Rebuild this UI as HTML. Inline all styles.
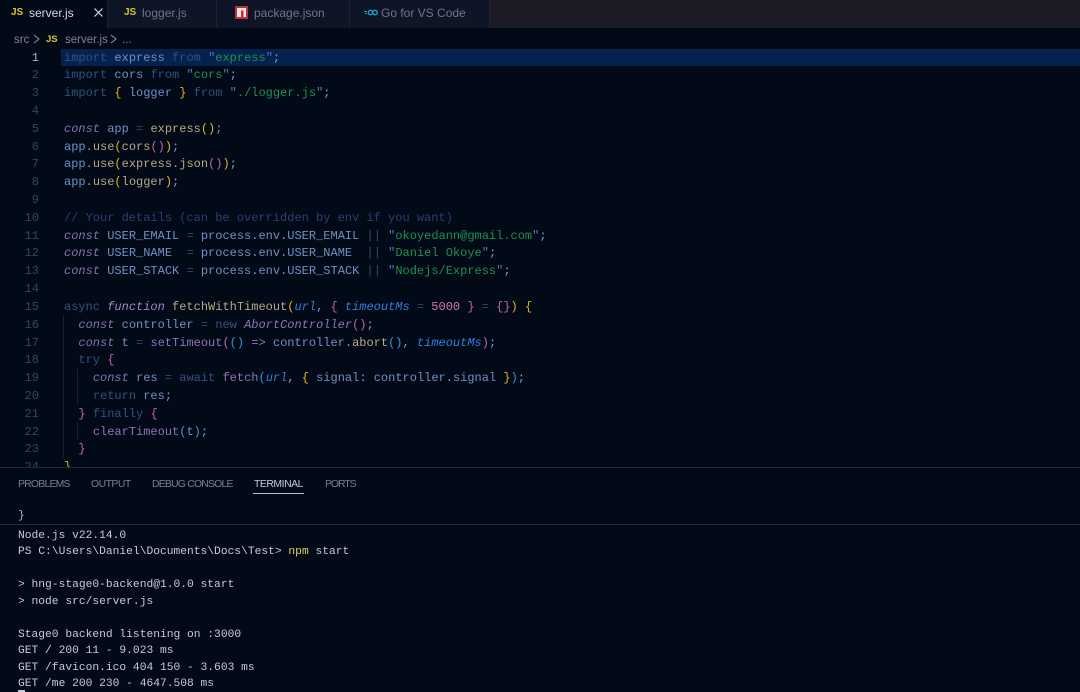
<!DOCTYPE html>
<html><head><meta charset="utf-8"><style>
html,body{margin:0;padding:0;background:#020a17;}
#r{position:relative;width:1080px;height:692px;overflow:hidden;background:#020a17;font-family:"Liberation Sans",sans-serif;filter:blur(.3px);}
.a{position:absolute;white-space:pre;}
.tab{position:absolute;top:0;height:28px;background:#0d1526;border-right:1px solid #1a2232;box-sizing:border-box;}
.t{position:absolute;top:5px;font-size:12px;line-height:16px;color:#6e7787;white-space:pre;}
.js{position:absolute;font:bold 10px "Liberation Sans",sans-serif;color:#d8c62e;}
#code{position:absolute;left:64px;top:49.5px;font:12px/17.82px "Liberation Mono",monospace;color:#7d9ccc;white-space:pre;height:417.5px;width:1016px;overflow:hidden;}
#nums{position:absolute;left:0;width:39px;top:49.5px;text-align:right;font:12px/17.82px "Liberation Mono",monospace;color:#33465f;height:417.5px;overflow:hidden;white-space:pre;}
.k{color:#2e5282}.v{color:#6f90c4}.s{color:#1d9150}.q{color:#4f7fbb}.c{color:#2b3f73}.i{font-style:italic;color:#8570ad}.f{color:#b5a886}
.y{color:#e3b623}.p{color:#c465b0}.b{color:#2f9ae0}.u{font-style:italic;color:#2f7fe0}.n{color:#d878a8}.w{color:#7f98bd}.ac{font-style:italic;color:#8e74b8}.d{color:#96a8c4}.o{color:#2e4a72}
.pt{position:absolute;top:477.5px;font-size:10.4px;line-height:13px;color:#77808e;white-space:pre;}
#term{position:absolute;left:18px;top:527.5px;font:11.27px/16.5px "Liberation Mono",monospace;color:#c4ccd8;white-space:pre;}
</style></head><body><div id="r">
<div class="a" style="left:490px;top:0;width:590px;height:28px;background:#1c1a25"></div>
<div class="tab" style="left:0;width:108px;background:#020a17"></div>
<div class="tab" style="left:108px;width:109px"></div>
<div class="tab" style="left:217px;width:133px"></div>
<div class="tab" style="left:350px;width:140px"></div>
<div class="js" style="left:11px;top:7px">JS</div>
<div class="t" style="left:29px;color:#d5dbe4">server.js</div>
<svg class="a" style="left:94px;top:8px" width="9" height="9" viewBox="0 0 9 9"><path d="M.5 .5 L8.5 8.5 M8.5 .5 L.5 8.5" stroke="#d5dbe4" stroke-width="1.2" fill="none"/></svg>
<div class="js" style="left:124px;top:7px">JS</div>
<div class="t" style="left:142px">logger.js</div>
<svg class="a" style="left:235px;top:6px" width="13" height="13" viewBox="0 0 13 13"><rect width="13" height="13" fill="#c0303a"/><path d="M2 11V2H11V11H8.5V4.5H6V11Z" fill="#f3e6e6"/></svg>
<div class="t" style="left:254px">package.json</div>
<svg class="a" style="left:364px;top:9px" width="14" height="7" viewBox="0 0 14 7"><path d="M0 2.5H3M1 4.5H3" stroke="#1a9cc0" stroke-width="1"/><circle cx="6.5" cy="3.5" r="2.2" fill="none" stroke="#1fa8cc" stroke-width="1.3"/><circle cx="11" cy="3.5" r="2.2" fill="none" stroke="#1fa8cc" stroke-width="1.3"/></svg>
<div class="t" style="left:381px">Go for VS Code</div>

<div class="a" style="left:14px;top:33px;font-size:11.5px;line-height:15px;color:#7a8494">src</div>
<svg class="a" style="left:33px;top:34px" width="7" height="10" viewBox="0 0 7 10"><path d="M1 1L6 5L1 9" stroke="#8a94a4" fill="none"/></svg>
<div class="js" style="left:46px;top:34px;font-size:9.5px">JS</div>
<div class="a" style="left:65px;top:33px;font-size:11.5px;line-height:15px;color:#7a8494">server.js</div>
<svg class="a" style="left:110px;top:34px" width="7" height="10" viewBox="0 0 7 10"><path d="M1 1L6 5L1 9" stroke="#8a94a4" fill="none"/></svg>
<div class="a" style="left:122px;top:33px;font-size:11.5px;line-height:15px;color:#7a8494">...</div>

<div class="a" style="left:61px;top:49px;width:1019px;height:17px;background:#04224d"></div>
<div class="a" style="left:63px;top:316px;width:1px;height:142px;background:#14233a"></div>
<div class="a" style="left:77px;top:369px;width:1px;height:36px;background:#14233a"></div>
<div class="a" style="left:77px;top:422px;width:1px;height:18px;background:#14233a"></div>
<div id="nums"><span style="color:#a3b5cf">1</span>
2
3
4
5
6
7
8
9
10
11
12
13
14
15
16
17
18
19
20
21
22
23
24</div>
<div id="code"><span class="k">import</span> <span class="v">express</span> <span class="k">from</span> <span class="q">"</span><span class="s">express</span><span class="q">"</span>;
<span class="k">import</span> <span class="v">cors</span> <span class="k">from</span> <span class="q">"</span><span class="s">cors</span><span class="q">"</span>;
<span class="k">import</span> <span class="y">{</span> <span class="v">logger</span> <span class="y">}</span> <span class="k">from</span> <span class="q">"</span><span class="s">./logger.js</span><span class="q">"</span>;

<span class="i">const</span> <span class="v">app</span> <span class="o">=</span> <span class="f">express</span><span class="y">()</span>;
<span class="v">app</span>.<span class="f">use</span><span class="y">(</span><span class="f">cors</span><span class="p">()</span><span class="y">)</span>;
<span class="v">app</span>.<span class="f">use</span><span class="y">(</span><span class="f">express</span>.<span class="f">json</span><span class="p">()</span><span class="y">)</span>;
<span class="v">app</span>.<span class="f">use</span><span class="y">(</span><span class="f">logger</span><span class="y">)</span>;

<span class="c">// Your details (can be overridden by env if you want)</span>
<span class="i">const</span> <span class="v">USER_EMAIL</span> <span class="o">=</span> <span class="v">process</span>.<span class="v">env</span>.<span class="v">USER_EMAIL</span> <span class="o">||</span> <span class="q">"</span><span class="s">okoyedann@gmail.com</span><span class="q">"</span>;
<span class="i">const</span> <span class="v">USER_NAME</span>  <span class="o">=</span> <span class="v">process</span>.<span class="v">env</span>.<span class="v">USER_NAME</span>  <span class="o">||</span> <span class="q">"</span><span class="s">Daniel Okoye</span><span class="q">"</span>;
<span class="i">const</span> <span class="v">USER_STACK</span> <span class="o">=</span> <span class="v">process</span>.<span class="v">env</span>.<span class="v">USER_STACK</span> <span class="o">||</span> <span class="q">"</span><span class="s">Nodejs/Express</span><span class="q">"</span>;

<span class="k">async</span> <span class="i" style="color:#a088c8">function</span> <span class="f">fetchWithTimeout</span><span class="y">(</span><span class="u">url</span>, <span class="p">{</span> <span class="u">timeoutMs</span> <span class="o">=</span> <span class="n">5000</span> <span class="p">}</span> <span class="o">=</span> <span class="p">{}</span><span class="y">)</span> <span class="y">{</span>
  <span class="i">const</span> <span class="v">controller</span> <span class="o">=</span> <span class="k">new</span> <span class="ac">AbortController</span><span class="p">()</span>;
  <span class="i">const</span> <span class="v">t</span> <span class="o">=</span> <span class="ac" style="font-style:normal">setTimeout</span><span class="p">(</span><span class="b">()</span> <span class="ac" style="font-style:normal">=&gt;</span> <span class="v">controller</span>.<span class="f">abort</span><span class="b">()</span>, <span class="u">timeoutMs</span><span class="p">)</span>;
  <span class="k">try</span> <span class="p">{</span>
    <span class="i">const</span> <span class="v">res</span> <span class="o">=</span> <span class="k">await</span> <span class="ac" style="font-style:normal">fetch</span><span class="b">(</span><span class="u">url</span>, <span class="y">{</span> <span class="v">signal</span>: <span class="v">controller</span>.<span class="v">signal</span> <span class="y">}</span><span class="b">)</span>;
    <span class="k">return</span> <span class="v">res</span>;
  <span class="p">}</span> <span class="k">finally</span> <span class="p">{</span>
    <span class="ac" style="font-style:normal">clearTimeout</span><span class="b">(</span><span class="v">t</span><span class="b">)</span>;
  <span class="p">}</span>
<span class="y">}</span></div>

<div class="a" style="left:0;top:467px;width:1080px;height:225px;background:#020a17;border-top:1px solid #1b2a40;box-sizing:border-box"></div>
<div class="pt" style="left:18px;letter-spacing:-.75px">PROBLEMS</div>
<div class="pt" style="left:91px;letter-spacing:-.5px">OUTPUT</div>
<div class="pt" style="left:152px;letter-spacing:-.77px">DEBUG CONSOLE</div>
<div class="pt" style="left:254px;color:#c4ccd8;letter-spacing:-.45px">TERMINAL</div>
<div class="pt" style="left:325px;letter-spacing:-1px">PORTS</div>
<div class="a" style="left:253px;top:493px;width:51px;height:1px;background:#b4bcc8"></div>
<div class="a" style="left:18px;top:508px;font:11.27px/16.5px 'Liberation Mono',monospace;color:#aab3c0">}</div>
<div class="a" style="left:0;top:524px;width:1080px;height:1px;background:#1b2a40"></div>
<div id="term">Node.js v22.14.0
PS C:\Users\Daniel\Documents\Docs\Test&gt; <span style="color:#e6cf6a">npm</span> start

&gt; hng-stage0-backend@1.0.0 start
&gt; node src/server.js

Stage0 backend listening on :3000
GET / 200 11 - 9.023 ms
GET /favicon.ico 404 150 - 3.603 ms
GET /me 200 230 - 4647.508 ms</div>
<div class="a" style="left:18px;top:690px;width:7px;height:2px;background:#c4ccd8"></div>
</div></body></html>
